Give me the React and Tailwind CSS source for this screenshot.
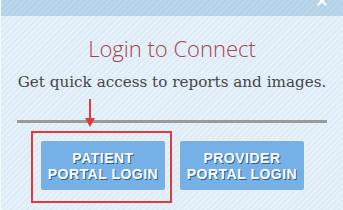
import { X } from 'lucide-react'

const stripes =
  'bg-[repeating-linear-gradient(135deg,#e6f1f9_0px,#e6f1f9_2px,#dcebf5_2px,#dcebf5_4px)]'

function PortalButton({ top, bottom }) {
  return (
    <button className="w-[128px] h-[53px] rounded-[3px] bg-[#eeebe9] p-[2px]">
      <div
        className="w-full h-full rounded-[2px] bg-[#75b1e6] flex items-center justify-center text-center text-white font-bold text-[14px] leading-[16px] tracking-[0.5px] [text-shadow:1px_1px_0_#2d5f8c]"
        style={{ fontFamily: '"Liberation Sans", Arial, sans-serif' }}
      >
        <span>
          {top}
          <br />
          {bottom}
        </span>
      </div>
    </button>
  )
}

export default function App() {
  return (
    <div className={`w-[343px] h-[210px] overflow-hidden ${stripes} border-l border-white/70`}>
      {/* Header bar */}
      <div className="h-[16px] bg-[repeating-linear-gradient(135deg,#bad6ea_0px,#bad6ea_2px,#b2d0e6_2px,#b2d0e6_4px)] flex justify-end">
        <div className="mr-[14px] -mt-[6px] text-white">
          <X className="w-[14px] h-[14px]" strokeWidth={4} />
        </div>
      </div>

      {/* Title */}
      <h1
        className="mt-[19px] text-center text-[22px] leading-[26px] font-light text-[#a8434d]"
        style={{ fontFamily: '"Open Sans", sans-serif' }}
      >
        Login to Connect
      </h1>

      {/* Subtitle */}
      <p
        className="mt-[11px] text-center text-[15.2px] leading-[20px] text-[#464646]"
        style={{ fontFamily: '"DejaVu Serif", serif' }}
      >
        Get quick access to reports and images.
      </p>

      {/* Arrow + divider */}
      <div className="relative mx-[16px] mt-[6px] pt-[22px]">
        <div className="absolute left-[68px] top-[1px] flex flex-col items-center">
          <div className="w-[2px] h-[19px] bg-[#e03b3b]" />
          <div className="w-0 h-0 border-l-[5px] border-r-[5px] border-t-[9px] border-l-transparent border-r-transparent border-t-[#e03b3b]" />
        </div>
        <div className="h-[3px] bg-[#9a9a9a]" />
      </div>

      {/* Buttons */}
      <div className="flex items-start mt-[8px] pl-[30px]">
        <div className="w-[141px] h-[72px] border-2 border-[#e03b3b] pl-[6px] pt-[6px]">
          <PortalButton top="PATIENT" bottom="PORTAL LOGIN" />
        </div>
        <div className="ml-[6px] pt-[8px]">
          <PortalButton top="PROVIDER" bottom="PORTAL LOGIN" />
        </div>
      </div>
    </div>
  )
}
